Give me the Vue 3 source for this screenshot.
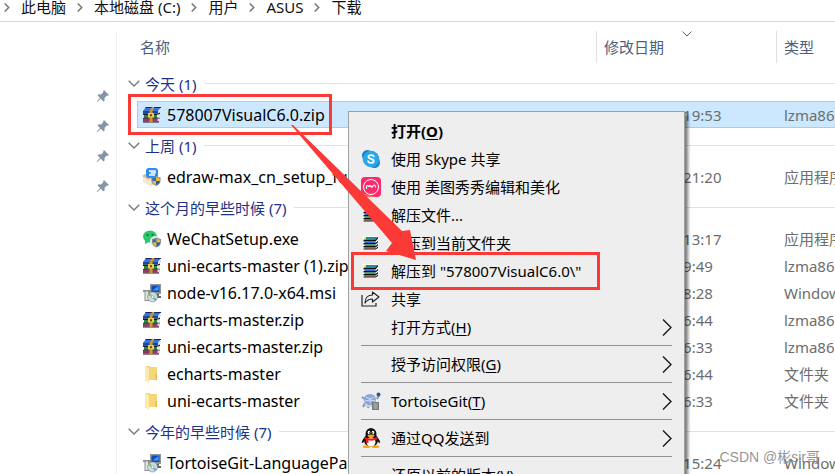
<script setup>
import {ref} from 'vue';

const crumbs = ['此电脑', '本地磁盘 (C:)', '用户', 'ASUS', '下载'];

const groups = ref([
  {
    title: '今天 (1)',
    files: [
      {name: '578007VisualC6.0.zip', icon: 'rar', date: '2022/9/26 19:53', type: 'lzma86 压缩文件'}
    ]
  },
  {
    title: '上周 (1)',
    files: [
      {name: 'edraw-max_cn_setup_full.exe', icon: 'edraw', date: '2022/9/20 21:20', type: '应用程序'}
    ]
  },
  {
    title: '这个月的早些时候 (7)',
    files: [
      {name: 'WeChatSetup.exe', icon: 'wechat', date: '2022/9/15 13:17', type: '应用程序'},
      {name: 'uni-ecarts-master (1).zip', icon: 'rar', date: '2022/9/14 9:49', type: 'lzma86 压缩文件'},
      {name: 'node-v16.17.0-x64.msi', icon: 'msi', date: '2022/9/14 8:28', type: 'Windows Installer'},
      {name: 'echarts-master.zip', icon: 'rar', date: '2022/9/13 6:44', type: 'lzma86 压缩文件'},
      {name: 'uni-ecarts-master.zip', icon: 'rar', date: '2022/9/13 6:33', type: 'lzma86 压缩文件'},
      {name: 'echarts-master', icon: 'folder', date: '2022/9/13 6:44', type: '文件夹'},
      {name: 'uni-ecarts-master', icon: 'folder', date: '2022/9/13 6:33', type: '文件夹'}
    ]
  },
  {
    title: '今年的早些时候 (7)',
    files: [
      {name: 'TortoiseGit-LanguagePack.msi', icon: 'msi', date: '2022/8/18 15:24', type: 'Windows Installer'}
    ]
  }
]);

const menu = [
  {text: '打开', hotkey: 'O', bold: true},
  {text: '使用 Skype 共享', icon: 'skype'},
  {text: '使用 美图秀秀编辑和美化', icon: 'meitu'},
  {text: '解压文件...', icon: 'books'},
  {text: '解压到当前文件夹', icon: 'books'},
  {text: '解压到 "578007VisualC6.0\\"', icon: 'books'},
  {text: '共享', icon: 'share'},
  {text: '打开方式', hotkey: 'H', sub: true, line: true},
  {text: '授予访问权限', hotkey: 'G', sub: true, line: true},
  {text: 'TortoiseGit', hotkey: 'T', sub: true, line: true, icon: 'tortoise'},
  {text: '通过QQ发送到', sub: true, line: true, icon: 'qq'},
  {text: '还原以前的版本', hotkey: 'V'}
];

const selected = ref('578007VisualC6.0.zip');
</script>

<template>
  <svg class="defs" width="0" height="0" aria-hidden="true">
    <symbol id="shield" viewBox="0 0 10 11">
      <path d="M5 0C6.500 1 8 1.500 10 1.500V5c0 3-2 5-5 6C2 10 0 8 0 5V1.500C2 1.500 3.500 1 5 0z" fill="#7f8a94" />
      <path d="M5 1.200V5.500H1V2.400C2.600 2.400 4 2 5 1.200z" fill="#2a74bd" />
      <path d="M5 1.200C6 2 7.400 2.400 9 2.400V5.500H5z" fill="#f5b82e" />
      <path d="M1 5.500H5V10C2.600 9.200 1 7.600 1 5.500z" fill="#f5b82e" />
      <path d="M9 5.500H5V10C7.400 9.200 9 7.600 9 5.500z" fill="#2a5f9e" />
    </symbol>
    <symbol id="rar" viewBox="0 0 20 20">
      <path d="M4 2h15l-3 4H1z" fill="#3d74dc" />
      <path d="M4 2h15v1H3z" fill="#14245c" />
      <path d="M1 6h15v2.500H1z" fill="#1d459c" />
      <path d="M16 6l3-3v3l-3 3z" fill="#dfe6f2" />
      <path d="M1 8.500h15l2-1v1.500l-2 1H1z" fill="#0f1830" />
      <path d="M2 10h14v3H2z" fill="#258a3e" />
      <path d="M15 9.500h3v3h-3z" fill="#dfe9dc" />
      <path d="M1 12.800h17v1H1z" fill="#1c1226" />
      <path d="M1 13.800h16v2.700H1z" fill="#9c3468" />
      <path d="M15.500 13.500h2.500v2.500h-2.500z" fill="#e7d5e2" />
      <path d="M1 16.500h16v1H1z" fill="#2c0f2a" />
      <path d="M7.500 6l2.500-4h2.500L10.500 6v11.500h-3z" fill="#c79a2c" />
      <path d="M6 8h6v4.500H6z" fill="#ecca55" />
      <path d="M8 9.200h2v2H8z" fill="#5d4714" />
    </symbol>
    <symbol id="edraw" viewBox="0 0 20 20">
      <path d="M1 9l8-3 7 3v6l-7 4-8-4z" fill="#ead9bd" />
      <path d="M1 9l8 3v7l-8-4z" fill="#f6e8d1" />
      <path d="M0 9l3-2 6 3-2 3z" fill="#d9bd92" />
      <rect x="4" y="1" width="12" height="10" rx="3" fill="#2d8cf0" />
      <path d="M7 4h6v2H8.500M7 8h6" fill="none" stroke="#fff" stroke-width="1.300" />
      <use href="#shield" x="9" y="9" width="10" height="10" />
    </symbol>
    <symbol id="wechat" viewBox="0 0 20 20">
      <ellipse cx="8" cy="7.500" rx="7" ry="6" fill="#2dc76b" />
      <path d="M3 11v4l4-2z" fill="#2dc76b" />
      <circle cx="5.500" cy="6" r="1" fill="#11602f" />
      <circle cx="10.500" cy="6" r="1" fill="#11602f" />
      <ellipse cx="13.500" cy="12" rx="5.500" ry="5" fill="#e6e9ec" />
      <use href="#shield" x="10" y="8" width="9" height="11" />
    </symbol>
    <symbol id="msi" viewBox="0 0 20 20">
      <path d="M1 7h7v11H2.500V9H1z" fill="#8d9090" />
      <path d="M3.500 8.500H6V17H3.500z" fill="#e3e5e5" />
      <path d="M8 1h11v10H8z" fill="#8f9699" />
      <path d="M9.500 2.500h8v6.500h-8z" fill="#1449bd" />
      <path d="M10.500 7.500l6-4.500v4.500z" fill="#3f9ff2" />
      <path d="M11 11h6v2h2v2h-8z" fill="#62686b" />
      <circle cx="10.500" cy="14" r="5" fill="#cfdadd" stroke="#7c8587" stroke-width=".6" />
      <path d="M10.500 14L6 12.500a5 5 0 0 1 2-3z" fill="#7bc46c" />
      <path d="M10.500 14l4.300 2a5 5 0 0 1-2 2.300z" fill="#54b7d1" />
      <circle cx="10.500" cy="14" r="1.300" fill="#fff" stroke="#838b8d" stroke-width=".6" />
    </symbol>
    <symbol id="folder" viewBox="0 0 20 20">
      <path d="M3 2h5v1h7v13H8L3 17z" fill="#f7d679" />
      <path d="M3 2l4 2.500V19l-4-3z" fill="#fdeaae" />
      <path d="M13.500 10H15v6h-1.500z" fill="#e8ba4c" />
    </symbol>
    <symbol id="pin" viewBox="0 0 14 14">
      <path d="M8 1l5 5-1.200.8-1-.2-2.300 2.300.2 2.300-1.200 1.300L4.800 9.800 1.200 13l-.5-.5 3.300-3.600L1.500 6.300 2.800 5.200l2.300.2 2.300-2.300-.2-1.100z" fill="#8695a5" />
    </symbol>
    <symbol id="skype" viewBox="0 0 20 20">
      <circle cx="6.500" cy="6.500" r="5.500" fill="#0f7fc5" />
      <circle cx="13.500" cy="13.500" r="5.500" fill="#1688d2" />
      <circle cx="10" cy="10" r="8.300" fill="#28a8ea" />
      <path d="M12.800 7.300C12.300 5.900 7.500 5.400 7.400 7.900c0 2.300 5.400 1.500 5.400 4.100 0 2.500-5 2.200-5.700.2" fill="none" stroke="#fff" stroke-width="1.800" stroke-linecap="round" />
    </symbol>
    <symbol id="meitu" viewBox="0 0 20 20">
      <rect width="20" height="20" rx="4" fill="#fb2b6c" />
      <path d="M0 16L16 20H4a4 4 0 0 1-4-4z" fill="#ff6a5a" />
      <circle cx="10" cy="10" r="7.500" fill="none" stroke="#fff" stroke-width="1" />
      <path d="M5.500 11.500V9.800c0-1.500 2-1.500 2.300 0 .3-1.500 2.200-1.500 2.400 0 .6 1.500 1.800-1.800 3-1.800 1 0 1.300 1 1.300 2" fill="none" stroke="#fff" stroke-width="1.200" stroke-linecap="round" />
    </symbol>
    <symbol id="books" viewBox="0 0 20 20">
      <path d="M2 3h15v14H2z" fill="#fff" />
      <path d="M5 4h12l-2.500 3H2.500z" fill="#1d8e9a" />
      <path d="M2.500 7h11.500l3-3v1.500L14.500 8.500h-12z" fill="#101010" />
      <path d="M3.500 8.500h11V10h-11z" fill="#2f66e0" />
      <path d="M2.500 10h12l2.500-2v1.500L14.500 11.500h-12z" fill="#101010" />
      <path d="M3.500 11.500h11V13h-11z" fill="#1fae52" />
      <path d="M2.500 13h12l2.500-2v1.500L14.500 14.500h-12z" fill="#101010" />
      <path d="M3.500 14.500h11v1h-11z" fill="#b83232" />
      <path d="M2.500 15.500h12l2.500-2V15l-2.500 1.500h-12z" fill="#101010" />
      <path d="M3 4.500h2v2H3z" fill="#f4e04a" />
    </symbol>
    <symbol id="share" viewBox="0 0 20 20">
      <path d="M1 6v11h14v-3" fill="none" stroke="#222" stroke-width="1.200" />
      <path d="M11.500 3l6.500 5-6.500 5v-3C8 10 6 11 4 14c0-5 3-8 7.500-8z" fill="none" stroke="#222" stroke-width="1.200" stroke-linejoin="round" />
    </symbol>
    <symbol id="tortoise" viewBox="0 0 20 20">
      <path d="M1 6l4 3M16 8l2-4M4 12l-2 4M8 13l-1 4" stroke="#8797ae" stroke-width="2" />
      <ellipse cx="9" cy="8.500" rx="6" ry="5.500" fill="#8aa5dc" />
      <path d="M5 6l4 2 4-2M9 8v4M4 10l5-1 5 1" fill="none" stroke="#d2def5" stroke-width="1" />
      <circle cx="17.500" cy="3.500" r="2" fill="#235d84" />
      <path d="M3 12c3 3 9 3 12 0l-2 4H5z" fill="#cbd2da" />
      <path d="M11 11h7v8h-7z" fill="#77787a" />
      <path d="M12.500 13h4M12.500 15h4M12.500 17h4" stroke="#ddd" stroke-width=".8" />
    </symbol>
    <symbol id="qq" viewBox="0 0 20 20">
      <path d="M4 9c-3 3-4 6-2.500 6L4 13zM16 9c3 3 4 6 2.500 6L16 13z" fill="#111" />
      <ellipse cx="10" cy="12" rx="7" ry="7" fill="#111" />
      <ellipse cx="10" cy="6" rx="5.500" ry="6" fill="#111" />
      <ellipse cx="10" cy="14" rx="4.500" ry="4.800" fill="#fff" />
      <ellipse cx="8" cy="4.500" rx="1.300" ry="1.800" fill="#fff" />
      <ellipse cx="12" cy="4.500" rx="1.300" ry="1.800" fill="#fff" />
      <circle cx="8.400" cy="4.800" r=".6" fill="#111" />
      <circle cx="11.600" cy="4.800" r=".6" fill="#111" />
      <ellipse cx="10" cy="7.800" rx="3.500" ry="1.200" fill="#f6a90c" />
      <path d="M4 9c4 2 8 2 12 0l.8 2c-4 2.200-9.600 2.200-13.600 0z" fill="#e41e20" />
      <path d="M5 11h2.500v4H5z" fill="#e41e20" />
      <ellipse cx="5.500" cy="18.700" rx="3.800" ry="1.300" fill="#f6a90c" />
      <ellipse cx="14.500" cy="18.700" rx="3.800" ry="1.300" fill="#f6a90c" />
    </symbol>
  </svg>

  <div class="explorer">
    <nav class="crumbs">
      <template v-for="crumb in crumbs" :key="crumb">
        <svg width="6" height="9" viewBox="0 0 6 9"><path d="M.7.5l4 4-4 4" /></svg>
        <a href="#">{{ crumb }}</a>
      </template>
    </nav>

    <div class="body">
      <aside class="side">
        <svg v-for="n in 4" :key="n" class="pin"><use href="#pin" /></svg>
      </aside>

      <main class="list">
        <table>
          <colgroup>
            <col>
            <col class="col-date">
            <col class="col-type">
          </colgroup>
          <thead>
            <tr>
              <th><div class="th first">名称</div></th>
              <th>
                <div class="th">修改日期
                  <svg class="sort" width="10" height="6" viewBox="0 0 10 6"><path d="M.5.5L5 5 9.500.5" /></svg>
                </div>
              </th>
              <th><div class="th">类型</div></th>
            </tr>
          </thead>
          <tbody v-for="group in groups" :key="group.title">
            <tr>
              <td colspan="3">
                <div class="group">
                  <svg width="12" height="7" viewBox="0 0 12 7"><path d="M.7.7L6 6 11.300.7" /></svg>
                  <span>{{ group.title }}</span>
                </div>
              </td>
            </tr>
            <tr
              v-for="file in group.files"
              :key="file.name"
              class="file"
              :class="{ selected: selected === file.name }"
              @click="selected = file.name"
            >
              <td>
                <div class="name">
                  <svg class="icon"><use :href="'#' + file.icon" /></svg>
                  <span>{{ file.name }}</span>
                </div>
              </td>
              <td class="date">{{ file.date }}</td>
              <td class="type">{{ file.type }}</td>
            </tr>
          </tbody>
        </table>
      </main>
    </div>

    <ul class="menu">
      <li v-for="item in menu" :key="item.text" :class="{ line: item.line }">
        <button :class="{ bold: item.bold }">
          <svg class="icon"><use v-if="item.icon" :href="'#' + item.icon" /></svg>
          <span class="label">{{ item.text }}<template v-if="item.hotkey">(<u>{{ item.hotkey }}</u>)</template></span>
          <svg v-if="item.sub" class="more" width="10" height="17" viewBox="0 0 10 17"><path d="M1 .5l8 8-8 8" /></svg>
        </button>
      </li>
    </ul>

    <div class="mark mark-file"></div>
    <div class="mark mark-item"></div>
    <svg class="arrow" width="126" height="136" viewBox="0 0 126 136">
      <path d="M0 0L2 0 111 106 119 105 125 135 95 126 101 118z" />
    </svg>
    <span class="watermark">CSDN @彬sir哥</span>
  </div>
</template>

<style>
body {
  background: #fff;
}
</style>

<style scoped>
.defs {
  position: absolute;
}

.explorer {
  position: relative;
  height: 100vh;
  overflow: hidden;
  display: flex;
  flex-direction: column;
  font: 15px/20px "Noto Sans", "Noto Sans CJK SC", sans-serif;
  color: #000;
  white-space: nowrap;
}

.crumbs {
  display: flex;
  align-items: center;
  gap: 11px;
  height: 14px;
  padding: 0 4px 7px;
  border-bottom: 1px solid #d9d9d9;
}

.crumbs a {
  color: #111;
  text-decoration: none;
}

.crumbs path {
  fill: none;
  stroke: #777;
  stroke-width: 1.5;
}

.body {
  flex: 1;
  display: flex;
  min-height: 0;
}

.side {
  width: 117px;
  flex: none;
  box-sizing: border-box;
  margin-top: 9px;
  padding: 58px 6px 0 0;
  border-right: 1px solid #f0f0f0;
  display: flex;
  flex-direction: column;
  align-items: flex-end;
  gap: 16px;
}

.pin {
  width: 14px;
  height: 14px;
}

.list {
  flex: 1;
  min-width: 0;
  padding: 9px 0 0 20px;
  overflow: hidden;
}

table {
  width: 100%;
  table-layout: fixed;
  border-collapse: collapse;
}

.col-date {
  width: 180px;
}

.col-type {
  width: 59px;
}

th,
td {
  padding: 0;
  text-align: left;
  font-weight: 400;
}

.th {
  display: flex;
  align-items: center;
  position: relative;
  height: 32px;
  margin-bottom: 3px;
  padding-left: 7px;
  border-left: 1px solid #e0e0e0;
  color: #4c607a;
}

.th.first {
  padding-left: 3px;
  border-left: none;
}

.sort {
  position: absolute;
  left: 0;
  right: 0;
  top: 0;
  margin: 0 auto;
}

.sort path {
  fill: none;
  stroke: #666;
}

.group {
  display: flex;
  align-items: center;
  gap: 5px;
  height: 35px;
  margin-left: -9px;
  color: #1e3287;
}

.group path {
  fill: none;
  stroke: #777;
  stroke-width: 1.3;
}

.group::after {
  content: "";
  flex: 1;
  height: 1px;
  margin-left: 3px;
  background: #e2e2e2;
}

.file td {
  height: 27px;
  box-sizing: border-box;
}

.file.selected td {
  background: #cce8ff;
  box-shadow: inset 0 1px #99d1ff, inset 0 -1px #99d1ff;
}

.file.selected td:first-child {
  box-shadow: inset 0 1px #99d1ff, inset 0 -1px #99d1ff, inset 1px 0 #99d1ff;
}

.name {
  display: flex;
  align-items: center;
  gap: 5px;
  padding-left: 5px;
  font-size: 16px;
}

.icon {
  width: 20px;
  height: 20px;
  flex: none;
}

td.date {
  padding-left: 12px;
  color: #6d6d6d;
}

td.type {
  padding-left: 8px;
  color: #6d6d6d;
}

.menu {
  position: absolute;
  left: 348px;
  top: 111px;
  width: 337px;
  box-sizing: border-box;
  margin: 0;
  padding: 5px 12px;
  list-style: none;
  background: #eee;
  border: 1px solid #a0a0a0;
  box-shadow: 3px 3px 3px rgba(0, 0, 0, 0.5);
}

.menu li.line {
  padding-bottom: 4px;
  margin-bottom: 4px;
  border-bottom: 1px solid #919191;
}

.menu button {
  display: flex;
  align-items: center;
  gap: 10px;
  width: 100%;
  height: 28px;
  padding: 0;
  border: none;
  background: none;
  color: #000;
  font: inherit;
  text-align: left;
}

.menu button.bold {
  font-weight: 700;
}

.label {
  flex: 1;
}

u {
  text-underline-offset: 2px;
}

.more path {
  fill: none;
  stroke: #111;
  stroke-width: 1.3;
}

.mark {
  position: absolute;
  box-sizing: border-box;
  border: 3px solid #fb3a37;
}

.mark-file {
  left: 128px;
  top: 94px;
  width: 204px;
  height: 41px;
}

.mark-item {
  left: 351px;
  top: 252px;
  width: 249px;
  height: 38px;
}

.arrow {
  position: absolute;
  left: 291px;
  top: 125px;
}

.arrow path {
  fill: #fb3a37;
}

.watermark {
  position: absolute;
  right: 15px;
  bottom: 7px;
  font: 14px/20px "Liberation Sans", "Noto Sans CJK SC", sans-serif;
  color: rgba(120, 120, 120, 0.8);
}
</style>
